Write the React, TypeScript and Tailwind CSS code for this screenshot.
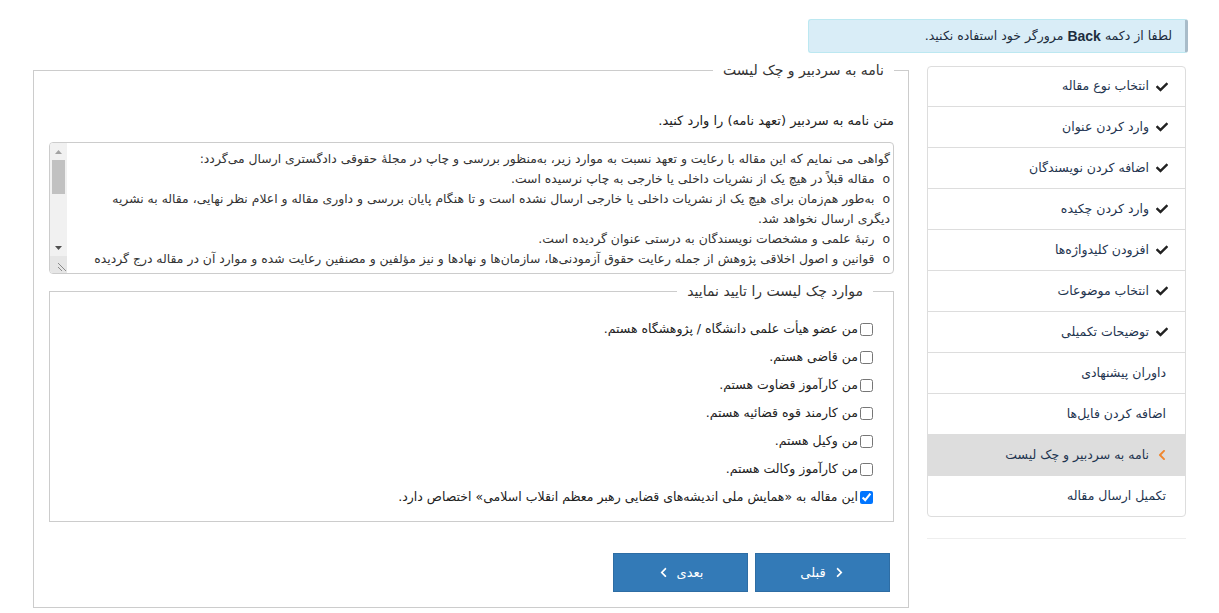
import { FaCheck, FaChevronLeft, FaChevronRight } from "react-icons/fa";

const steps = [
  { title: "انتخاب نوع مقاله", done: true },
  { title: "وارد کردن عنوان", done: true },
  { title: "اضافه کردن نویسندگان", done: true },
  { title: "وارد کردن چکیده", done: true },
  { title: "افزودن کلیدواژه‌ها", done: true },
  { title: "انتخاب موضوعات", done: true },
  { title: "توضیحات تکمیلی", done: true },
  { title: "داوران پیشنهادی" },
  { title: "اضافه کردن فایل‌ها" },
  { title: "نامه به سردبیر و چک لیست", active: true },
  { title: "تکمیل ارسال مقاله" },
];

const checklist = [
  { label: "من عضو هیأت علمی دانشگاه / پژوهشگاه هستم." },
  { label: "من قاضی هستم." },
  { label: "من کارآموز قضاوت هستم." },
  { label: "من کارمند قوه قضائیه هستم." },
  { label: "من وکیل هستم." },
  { label: "من کارآموز وکالت هستم." },
  {
    label: "این مقاله به «همایش ملی اندیشه‌های قضایی رهبر معظم انقلاب اسلامی» اختصاص دارد.",
    checked: true,
  },
];

const letter = [
  "گواهی می نمایم که این مقاله با رعایت و تعهد نسبت به موارد زیر، به‌منظور بررسی و چاپ در مجلهٔ حقوقی دادگستری ارسال می‌گردد:",
  "o  مقاله قبلاً در هیچ یک از نشریات داخلی یا خارجی به چاپ نرسیده است.",
  "o  به‌طور هم‌زمان برای هیچ یک از نشریات داخلی یا خارجی ارسال نشده است و تا هنگام پایان بررسی و داوری مقاله و اعلام نظر نهایی، مقاله به نشریه دیگری ارسال نخواهد شد.",
  "o  رتبهٔ علمی و مشخصات نویسندگان به درستی عنوان گردیده است.",
  "o  قوانین و اصول اخلاقی پژوهش از جمله رعایت حقوق آزمودنی‌ها، سازمان‌ها و نهادها و نیز مؤلفین و مصنفین رعایت شده و موارد آن در مقاله درج گردیده است.",
].join("\n");

function StepList() {
  return (
    <div className="mt-[3px] w-[259px] shrink-0">
      <ul className="overflow-hidden rounded-[4px] border border-[#dddddd] bg-white">
        {steps.map((s, i) => (
          <li
            key={s.title}
            className={`flex items-center gap-[7px] pl-3 ${
              i > 0 ? "h-[41px] border-t border-[#dddddd]" : "h-[39px]"
            } ${s.done || s.active ? "pr-[17px]" : "pr-[19px]"} ${
              s.active ? "bg-[#dddddd]" : ""
            } text-[12.5px] text-[#1f3550]`}
          >
            {s.done && <FaCheck className="h-[12px] w-[12px] text-[#222]" />}
            {s.active && (
              <FaChevronLeft className="h-[12px] w-[12px] text-[#f0862e]" />
            )}
            <span>{s.title}</span>
          </li>
        ))}
      </ul>
      <div className="mt-[21px] border-t border-[#eeeeee]" />
    </div>
  );
}

// the letter box is drawn as a textarea with a classic left-hand scrollbar
function LetterBox() {
  return (
    <div className="mt-[11px] flex h-[132px] overflow-hidden rounded-[4px] border border-[#cccccc] bg-white">
      <div className="h-full min-w-0 flex-1 overflow-hidden whitespace-pre-wrap pl-[16px] pr-[3px] pt-[6px] text-[12.4px] leading-[20px] text-[#333]">
        {letter}
      </div>
      <div className="flex w-[17px] shrink-0 flex-col bg-[#f1f1f1]">
        <div className="flex h-[17px] items-center justify-center">
          <svg width="7" height="4" viewBox="0 0 7 4">
            <path d="M3.5 0L7 4H0z" fill="#a3a3a3" />
          </svg>
        </div>
        <div className="flex-1 px-[2px]">
          <div className="h-[34px] bg-[#c1c1c1]" />
        </div>
        <div className="flex h-[17px] items-center justify-center">
          <svg width="7" height="4" viewBox="0 0 7 4">
            <path d="M0 0h7L3.5 4z" fill="#505050" />
          </svg>
        </div>
        <div className="flex h-[17px] items-end justify-start bg-[#e6e6e6]">
          <svg width="10" height="10" viewBox="0 0 10 10" className="mb-[1px] ml-[1px]">
            <path d="M1 1l8 8M1 5l4 4" stroke="#8a8a8a" strokeWidth="1" />
          </svg>
        </div>
      </div>
    </div>
  );
}

function App() {
  return (
    <div
      dir="rtl"
      className="min-h-screen bg-white font-['DejaVu_Sans',sans-serif] text-[13px] text-[#333]"
    >
      <div className="pl-[33px] pr-[31px] pt-[19px]">
        <div className="flex">
          <div className="flex h-[34px] w-[380px] items-center rounded-[3px] border border-[#bce8f1] border-r-[3px] border-r-[#a9bcc9] bg-[#d9edf7] pr-[13px] text-[12.5px] text-[#1d2d3e]">
            لطفا از دکمه{" "}
            <b className="mx-[4px] font-['Liberation_Sans',sans-serif] text-[14px]">
              Back
            </b>{" "}
            مرورگر خود استفاده نکنید.
          </div>
        </div>

        <div className="mt-[10px] flex items-start gap-[18px] pr-[2px]">
          <StepList />

          <fieldset className="min-w-0 flex-1 border border-[#cccccc] pb-[15px] pl-[15px] pr-[14px]">
            <legend className="px-[10px] text-[14px] leading-[14px] text-[#333]">
              نامه به سردبیر و چک لیست
            </legend>

            <p className="mt-[34px] text-[13px] leading-[20px] text-[#222]">
              متن نامه به سردبیر (تعهد نامه) را وارد کنید.
            </p>

            <LetterBox />

            <fieldset className="mt-[10px] border border-[#cccccc] pb-[10px] pl-4 pr-[20px]">
              <legend className="px-[10px] text-[14px] leading-[14px] text-[#333]">
                موارد چک لیست را تایید نمایید
              </legend>
              <div className="mt-[17px]">
                {checklist.map((c) => (
                  <label
                    key={c.label}
                    className="flex h-[28px] items-center gap-[2px] text-[12.5px] text-[#222]"
                  >
                    <input
                      type="checkbox"
                      defaultChecked={c.checked}
                      className="h-[13px] w-[13px] accent-[#0075ff]"
                    />
                    <span>{c.label}</span>
                  </label>
                ))}
              </div>
            </fieldset>

            <div className="mt-[31px] flex gap-[7px] pr-[4px]">
              <button
                type="button"
                className="flex h-[39px] w-[135px] items-center justify-center gap-[8px] border border-[#2e6da4] bg-[#337ab7] text-[13px] text-white"
              >
                <FaChevronRight className="h-[11px] w-[11px]" />
                <span>قبلی</span>
              </button>
              <button
                type="button"
                className="flex h-[39px] w-[135px] items-center justify-center gap-[8px] border border-[#2e6da4] bg-[#337ab7] text-[13px] text-white"
              >
                <span>بعدی</span>
                <FaChevronLeft className="h-[11px] w-[11px]" />
              </button>
            </div>
          </fieldset>
        </div>
      </div>
    </div>
  );
}

export default App;
